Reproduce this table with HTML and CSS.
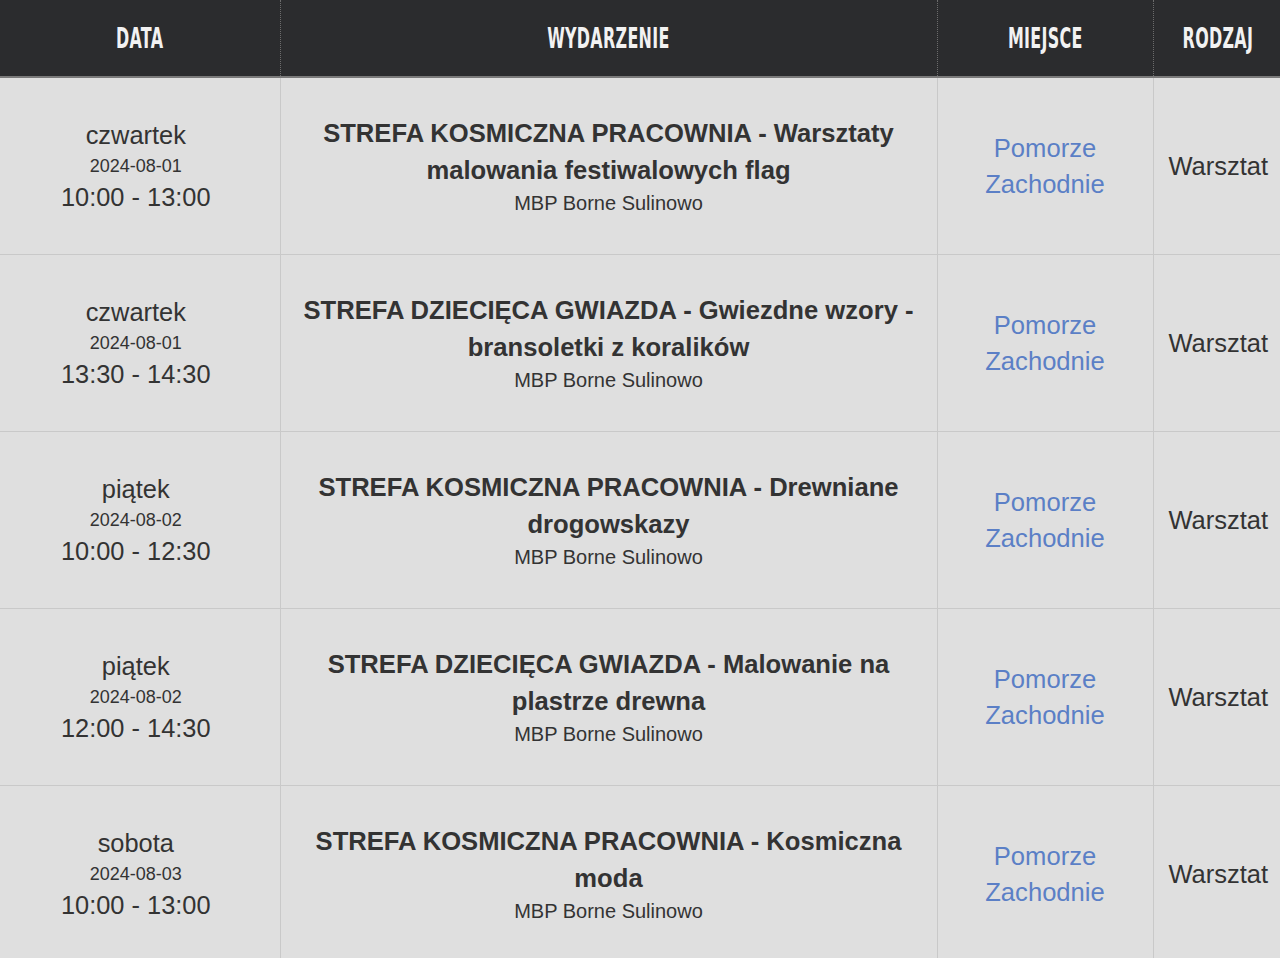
FILE: index.html
```html
<!DOCTYPE html>
<html lang="pl">
<head>
<meta charset="utf-8">
<title>Wydarzenia</title>
<link rel="stylesheet" href="styles.css">
</head>
<body>
<table class="events">
  <colgroup>
    <col class="c-date"><col class="c-event"><col class="c-place"><col class="c-kind">
  </colgroup>
  <thead>
    <tr>
      <th><span class="hd">DATA</span></th>
      <th><span class="hd">WYDARZENIE</span></th>
      <th><span class="hd">MIEJSCE</span></th>
      <th><span class="hd">RODZAJ</span></th>
    </tr>
  </thead>
  <tbody>
    <tr>
      <td class="date"><div class="day">czwartek</div><div class="ymd">2024-08-01</div><div class="time">10:00 - 13:00</div></td>
      <td class="event"><div class="title">STREFA KOSMICZNA PRACOWNIA - Warsztaty malowania festiwalowych flag</div><div class="venue">MBP Borne Sulinowo</div></td>
      <td class="place"><a href="#">Pomorze Zachodnie</a></td>
      <td class="kind">Warsztat</td>
    </tr>
    <tr>
      <td class="date"><div class="day">czwartek</div><div class="ymd">2024-08-01</div><div class="time">13:30 - 14:30</div></td>
      <td class="event"><div class="title">STREFA DZIECIĘCA GWIAZDA - Gwiezdne wzory - bransoletki z koralików</div><div class="venue">MBP Borne Sulinowo</div></td>
      <td class="place"><a href="#">Pomorze Zachodnie</a></td>
      <td class="kind">Warsztat</td>
    </tr>
    <tr>
      <td class="date"><div class="day">piątek</div><div class="ymd">2024-08-02</div><div class="time">10:00 - 12:30</div></td>
      <td class="event"><div class="title">STREFA KOSMICZNA PRACOWNIA - Drewniane drogowskazy</div><div class="venue">MBP Borne Sulinowo</div></td>
      <td class="place"><a href="#">Pomorze Zachodnie</a></td>
      <td class="kind">Warsztat</td>
    </tr>
    <tr>
      <td class="date"><div class="day">piątek</div><div class="ymd">2024-08-02</div><div class="time">12:00 - 14:30</div></td>
      <td class="event"><div class="title">STREFA DZIECIĘCA GWIAZDA - Malowanie na plastrze drewna</div><div class="venue">MBP Borne Sulinowo</div></td>
      <td class="place"><a href="#">Pomorze Zachodnie</a></td>
      <td class="kind">Warsztat</td>
    </tr>
    <tr>
      <td class="date"><div class="day">sobota</div><div class="ymd">2024-08-03</div><div class="time">10:00 - 13:00</div></td>
      <td class="event"><div class="title">STREFA KOSMICZNA PRACOWNIA - Kosmiczna moda</div><div class="venue">MBP Borne Sulinowo</div></td>
      <td class="place"><a href="#">Pomorze Zachodnie</a></td>
      <td class="kind">Warsztat</td>
    </tr>
  </tbody>
</table>
</body>
</html>
```

FILE: styles.css
```css
html, body {
  margin: 0;
  padding: 0;
  background: #dfdfdf;
  overflow: hidden;
}
body {
  font-family: "Liberation Sans", Arial, sans-serif;
  color: #333;
}
.events {
  width: 1283px;
  border-collapse: collapse;
  table-layout: fixed;
}
.c-date { width: 280px; }
.c-event { width: 657px; }
.c-place { width: 216px; }
.c-kind { width: 130px; }

.events th {
  height: 76px;
  padding: 0;
  background: #2b2c2e;
  color: #f2f2f2;
  border-bottom: 2px solid #7a7a7a;
  border-left: 1px dotted #6c6c6c;
  text-align: center;
  vertical-align: middle;
}
.events th:first-child { border-left: none; }
.hd {
  display: inline-block;
  font-family: "Liberation Sans Narrow", "DejaVu Sans Condensed", "Liberation Sans", sans-serif;
  font-weight: bold;
  font-size: 29px;
  line-height: 30px;
  transform: scaleX(0.61);
  letter-spacing: 0.5px;
}

.events td {
  height: 176px;
  padding: 0;
  border-bottom: 1px solid #c9c9c9;
  border-left: 1px solid #c9c9c9;
  text-align: center;
  vertical-align: middle;
}
.events td:first-child { border-left: none; }

.events td.date { padding-right: 8px; }
.date .day { font-size: 25.4px; line-height: 31px; }
.date .ymd { font-size: 18px; line-height: 31px; }
.date .time { font-size: 25.4px; line-height: 31px; }

.events td.event { padding: 0 20px; }
.event .title {
  font-weight: bold;
  font-size: 25.6px;
  line-height: 37px;
}
.event .venue {
  font-size: 20px;
  line-height: 28px;
}

.place a {
  color: #5b7fc6;
  text-decoration: none;
  font-size: 25.6px;
  line-height: 36px;
  display: inline-block;
  width: 140px;
}

.kind {
  font-size: 25.5px;
  line-height: 31px;
}
```
